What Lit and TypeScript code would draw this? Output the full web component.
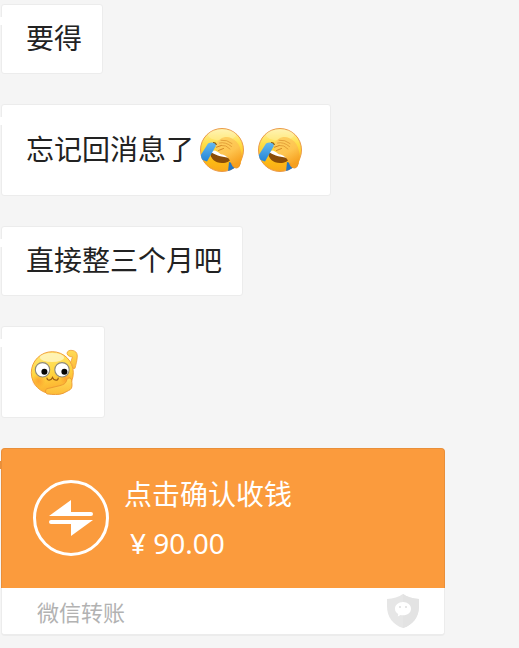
import { LitElement, html, css, nothing } from "lit";
import { customElement, property } from "lit/decorators.js";

@customElement("emoji-facepalm")
class EmojiFacepalm extends LitElement {
  static styles = css`
    :host { display: block; width: 58px; height: 58px; flex: none; }
    svg { display: block; width: 100%; height: 100%; }
  `;
  render() {
    return html`<svg viewBox="0 0 58 58" role="img" aria-label="捂脸">
      <defs>
        <linearGradient id="face" x1="0" y1="0" x2="0" y2="1">
          <stop offset="0" stop-color="#fff2a8" /><stop offset="0.35" stop-color="#ffdf4a" />
          <stop offset="0.75" stop-color="#fdbb14" /><stop offset="1" stop-color="#faa81a" />
        </linearGradient>
        <linearGradient id="hand" x1="0" y1="0" x2="0.5" y2="1">
          <stop offset="0" stop-color="#fdd266" /><stop offset="0.6" stop-color="#fec44e" />
          <stop offset="1" stop-color="#f6a01e" />
        </linearGradient>
        <linearGradient id="tear" x1="0" y1="0" x2="0" y2="1">
          <stop offset="0" stop-color="#64b8f0" /><stop offset="1" stop-color="#2484d6" />
        </linearGradient>
        <clipPath id="round"><circle cx="28" cy="29" r="22" /></clipPath>
      </defs>
      <circle cx="28" cy="29" r="21.5" fill="url(#face)" stroke="#eb9a48" stroke-width="1" />
      <ellipse cx="28" cy="14" rx="14" ry="5.5" fill="#fff8d0" opacity="0.3" />
      <g clip-path="url(#round)">
        <path d="M16 30 C16 38 21 42 28 42 C33 42 36 40 38 37 Z" fill="#8a4d08" />
        <path d="M17.5 30 L21 29.5 C26 32.5 32 34 37 36 L37 37 C30 36.5 22 34.5 17.5 31.5Z" fill="#fff" />
        <path d="M14 22.5 Q18 20.5 23 23 L13 40.5 Q8.5 40 5.5 36 Z" fill="url(#tear)" />
        <path d="M35 41 L41 43 L41 48 L36 52 L34 51 Z" fill="#2476c4" />
      </g>
      <path d="M22 23.5 C22.5 21 24 19.5 26.5 18 C29.5 15.8 34 15.6 37 17 C41.5 19 44.5 22 45.8 26 C47 30.5 49 35 47.5 39.5 C46 43 46 47 42.5 47 C38.5 47 38 44 37 41.5 C36 38.5 33 35 29 33.5 C26 33.5 24 31.5 24.5 29.5 C22.5 29 21.5 27.5 22.5 26 C21.5 25.5 21.5 24.5 22 23.5 Z" fill="url(#hand)" />
      <path d="M22.5 26.2 L27.5 24.4 M24.5 29.5 L29.5 27.5" fill="none" stroke="#cd7f1c" stroke-width="0.9" stroke-linecap="round" />
      <path d="M27 19.2 Q33 18.5 38 22.5 M25.5 22 Q31.5 20.5 37.5 25.5 M27.5 24.4 Q32 23.6 36 28" fill="none" stroke="#dc9430" stroke-width="0.8" stroke-linecap="round" />
      <path d="M19.5 21.5 Q21.5 21.5 22.3 23.5" fill="none" stroke="#8a5a10" stroke-width="1.2" stroke-linecap="round" />
      <path d="M46.5 41.5 C45.6 44 45.4 46.8 42.5 47 C39.4 47 38.6 44.5 37.6 42" fill="none" stroke="#ec9322" stroke-width="0.9" />
    </svg>`;
  }
}

@customElement("emoji-wow")
class EmojiWow extends LitElement {
  static styles = EmojiFacepalm.styles;
  render() {
    return html`<svg viewBox="0 0 58 58" role="img" aria-label="让我看看">
      <defs>
        <linearGradient id="face" x1="0.3" y1="0" x2="0.5" y2="1">
          <stop offset="0" stop-color="#ffe873" /><stop offset="0.5" stop-color="#ffd640" />
          <stop offset="1" stop-color="#fcaa2e" />
        </linearGradient>
        <linearGradient id="arm" x1="0" y1="0" x2="0" y2="1">
          <stop offset="0" stop-color="#ffdc58" /><stop offset="1" stop-color="#fdbc38" />
        </linearGradient>
        <radialGradient id="blush"><stop offset="0" stop-color="#fb8a28" /><stop offset="1" stop-color="#fb8a28" stop-opacity="0" /></radialGradient>
      </defs>
      <circle cx="26.3" cy="29.7" r="21" fill="url(#face)" stroke="#f2a03c" stroke-width="1" />
      <ellipse cx="26" cy="14.5" rx="12" ry="4.6" fill="#fff9d4" opacity="0.7" />
      <circle cx="12.5" cy="38" r="7" fill="url(#blush)" opacity="0.6" />
      <circle cx="40" cy="36" r="6" fill="url(#blush)" opacity="0.6" />
      <circle cx="16.5" cy="26.8" r="7.2" fill="#fff" stroke="#8d8878" stroke-width="1.1" />
      <circle cx="36" cy="26.8" r="7.2" fill="#fff" stroke="#8d8878" stroke-width="1.1" />
      <circle cx="18.4" cy="28.8" r="3" fill="#050505" />
      <circle cx="38.4" cy="28.8" r="3" fill="#050505" />
      <path d="M21 35 C21 38 25 38 26.5 34.5 C28 38 32.2 38 32.2 35" fill="none" stroke="#9a5c10" stroke-width="1.2" stroke-linecap="round" />
      <path d="M41 10.5 C41 8 43.5 7 46 7.4 C49 7.5 51.4 9.6 51.3 13 C51.2 17 50 21.5 49 25.3 L47 25.5 C46.6 22.5 45.4 20.5 44.6 19.5 L46.5 13.8 C44.5 14 41.5 13 41 10.5Z" fill="url(#arm)" stroke="#eda038" stroke-width="0.8" stroke-linejoin="round" />
      <path d="M19.6 48 C19.4 45.6 21.5 45.6 24 45 L34 42.6 C37.5 41.6 39.6 40.6 40.4 38 C41 35.6 42.4 34.6 44 35 C46 35.6 45.8 38 46 42 C46 45.2 45 46.4 42.5 47.6 L37 50.4 C33 52 26 51.6 21.5 51 C19.8 50.6 19.6 49.4 19.6 48Z" fill="url(#arm)" stroke="#eb9630" stroke-width="0.9" stroke-linejoin="round" />
    </svg>`;
  }
}

@customElement("chat-bubble")
class ChatBubble extends LitElement {
  @property() text = "";
  @property({ type: Array }) emojis: string[] = [];

  static styles = css`
    :host {
      display: block;
      position: relative;
      max-width: 100%;
      box-sizing: border-box;
      padding: 16px 20px 16px 24px;
      background: #fff;
      border: 1px solid #ececec;
      border-radius: 3px;
    }
    :host::before {
      content: "";
      position: absolute;
      left: -2px;
      top: 12px;
      width: 3px;
      height: 8px;
      background: #fff;
    }
    .line {
      display: flex;
      align-items: center;
      margin: 0;
      font-size: 28px;
      color: #222;
    }
    .text { padding-bottom: 4px; line-height: 32px; }
  `;
  render() {
    return html`<p class="line">
      ${this.text ? html`<span class="text">${this.text}</span>` : nothing}
      ${this.emojis.map((e) => (e === "facepalm" ? html`<emoji-facepalm></emoji-facepalm>` : html`<emoji-wow></emoji-wow>`))}
    </p>`;
  }
}

@customElement("transfer-card")
class TransferCard extends LitElement {
  @property() heading = "";
  @property() amount = "";
  @property() source = "";

  static styles = css`
    :host {
      display: block;
      position: relative;
      width: 444px;
      max-width: 100%;
    }
    :host::before {
      content: "";
      position: absolute;
      left: -1px;
      top: 13px;
      width: 2px;
      height: 8px;
      background: #e98f3a;
    }
    .card {
      display: block;
      width: 100%;
      padding: 0;
      border: 0;
      background: none;
      font: inherit;
      text-align: left;
      cursor: pointer;
    }
    .main {
      display: flex;
      align-items: center;
      gap: 15px;
      box-sizing: border-box;
      height: 140px;
      padding: 0 31px 1px;
      background: #fb9b3d;
      border: 1px solid #e98f3a;
      border-bottom: 0;
      border-radius: 4px 4px 0 0;
      color: #fff;
    }
    .swap { flex: none; width: 76px; height: 76px; }
    .info {
      display: flex;
      flex-direction: column;
      gap: 14px;
      font-size: 28px;
      line-height: 36px;
    }
    .amount {
      padding-left: 6px;
      font-family: "Noto Sans", "Noto Sans CJK SC", sans-serif;
    }
    .foot {
      display: flex;
      align-items: center;
      justify-content: space-between;
      box-sizing: border-box;
      height: 48px;
      padding: 0 25px 0 35px;
      background: #fff;
      border: 1px solid #ececec;
      border-top: 0;
      border-bottom-width: 2px;
      border-radius: 0 0 4px 4px;
      color: #b2b2b2;
      font-size: 22px;
      line-height: 28px;
    }
    .shield { flex: none; width: 32px; height: 34px; }
  `;
  render() {
    return html`<button class="card" type="button">
      <span class="main">
        <svg class="swap" viewBox="0 0 76 76" aria-hidden="true">
          <circle cx="38" cy="38" r="36.5" fill="none" stroke="#fff" stroke-width="3" />
          <path d="M16 36 L38 20 V32 H58 A2 2 0 0 1 58 36 Z" fill="#fff" />
          <path d="M60 40 L38 56 V44 H18 A2 2 0 0 1 18 40 Z" fill="#fff" />
        </svg>
        <span class="info"><span>${this.heading}</span><span class="amount">${this.amount}</span></span>
      </span>
      <span class="foot">
        <span>${this.source}</span>
        <svg class="shield" viewBox="0 0 32 34" aria-hidden="true">
          <path d="M16 0 C12 3 6 4.6 0 5 V12 C0 23 6 31 16 34 C26 31 32 23 32 12 V5 C26 4.6 20 3 16 0Z" fill="#e6e6e6" />
          <path d="M16 0 V34 C26 31 32 23 32 12 V5 C26 4.6 20 3 16 0Z" fill="#e3e3e3" />
          <path d="M16 8 C20.6 8 24 11 24 14.7 C24 18.5 20.6 21.3 16 21.3 C15 21.3 14.4 21.2 13.6 21 L10.8 22.6 L11.2 20 C9.2 18.8 8 17 8 14.7 C8 11 11.4 8 16 8Z" fill="#fff" />
          <circle cx="13" cy="13" r="1.1" fill="#e0e0e0" /><circle cx="19" cy="13" r="1.1" fill="#e0e0e0" />
        </svg>
      </span>
    </button>`;
  }
}

@customElement("app-root")
class AppRoot extends LitElement {
  static styles = css`
    :host {
      display: flex;
      flex-direction: column;
      align-items: flex-start;
      gap: 30px;
      box-sizing: border-box;
      min-height: 100vh;
      padding: 4px 1px 12px;
      background: #f5f5f5;
      font-family: "Noto Sans CJK SC", sans-serif;
    }
  `;
  render() {
    return html`
      <chat-bubble text="要得"></chat-bubble>
      <chat-bubble text="忘记回消息了" .emojis=${["facepalm", "facepalm"]}></chat-bubble>
      <chat-bubble text="直接整三个月吧"></chat-bubble>
      <chat-bubble .emojis=${["wow"]}></chat-bubble>
      <transfer-card heading="点击确认收钱" amount="¥ 90.00" source="微信转账"></transfer-card>
    `;
  }
}
